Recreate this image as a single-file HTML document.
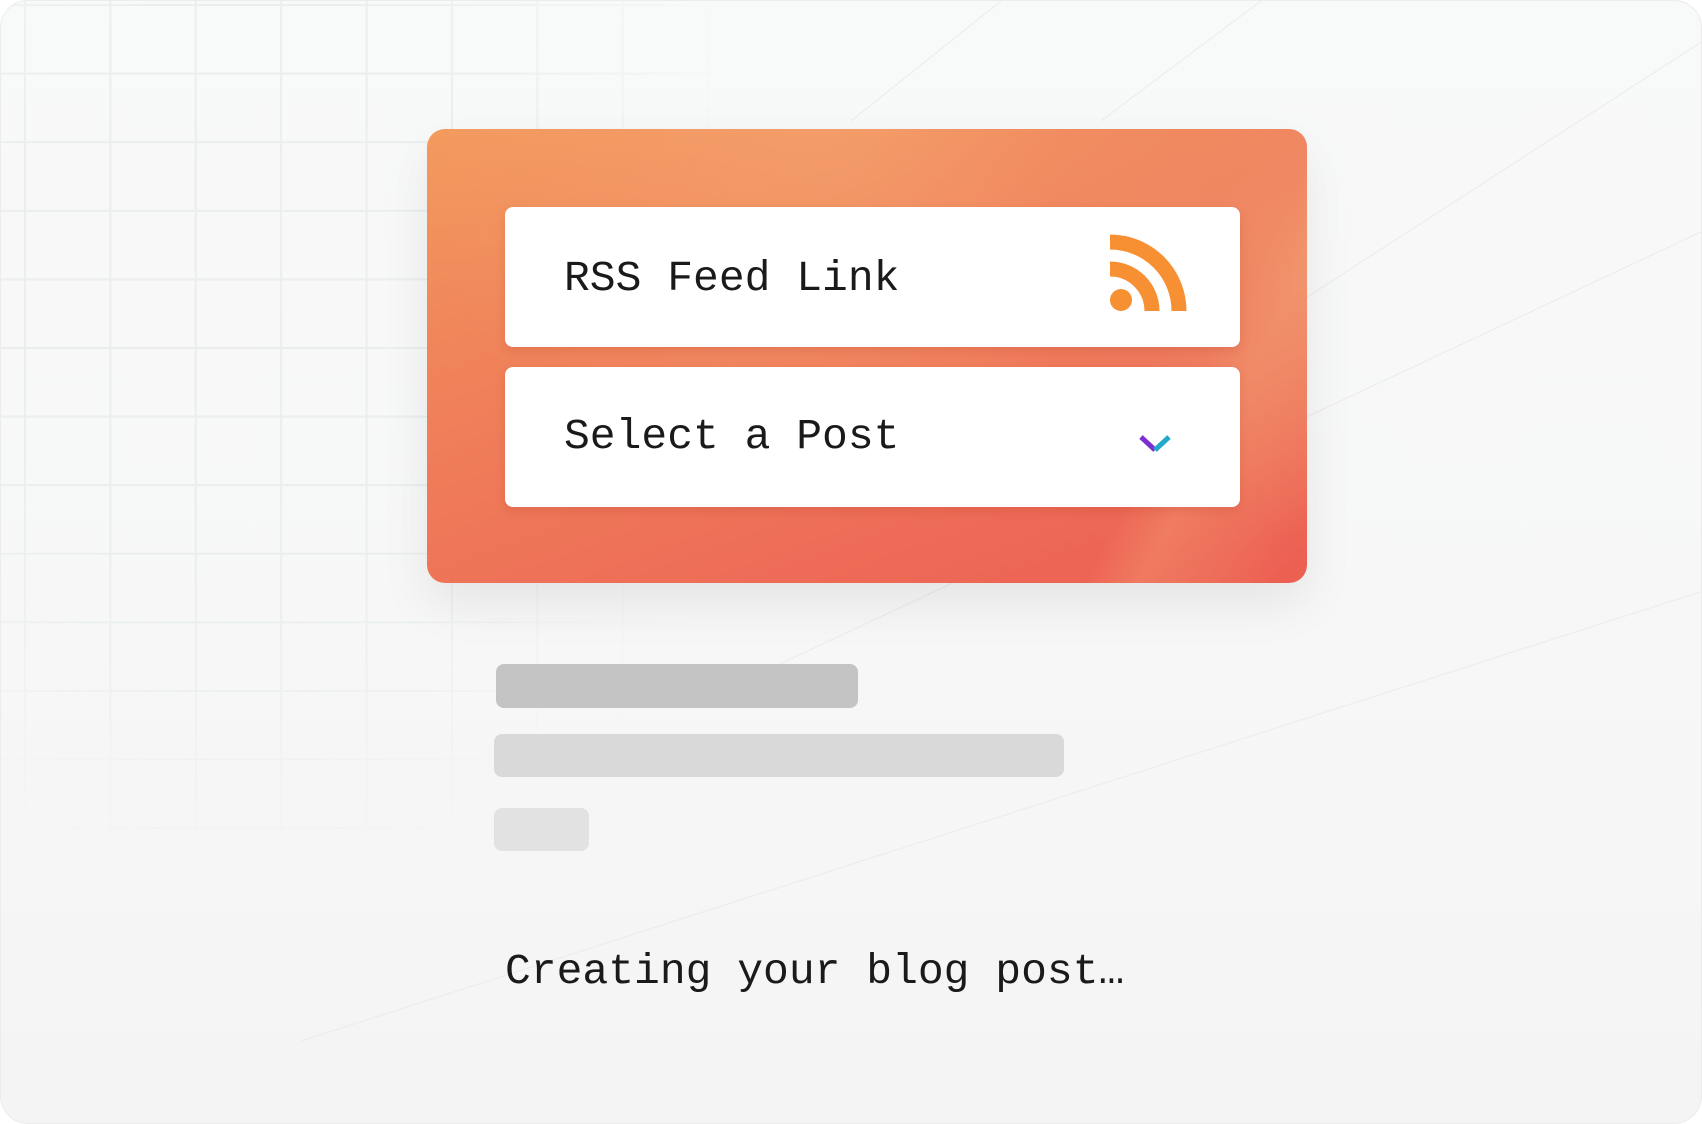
<!DOCTYPE html>
<html><head><meta charset="utf-8"><style>
html,body{margin:0;padding:0;width:1702px;height:1124px;overflow:hidden;background:#fff;}
.frame{position:absolute;left:0;top:0;width:1700px;height:1122px;border:1px solid #ececec;border-radius:28px;background:linear-gradient(180deg,#f8f9f9 0%,#f7f7f7 60%,#f4f4f4 100%);overflow:hidden;}
.grid{position:absolute;left:0;top:0;width:710px;height:830px;
background-image:linear-gradient(to right,#e8eded 2px,transparent 2px),linear-gradient(to bottom,#e8eded 2px,transparent 2px);
background-size:85.4px 68.6px;background-position:23px 3px;
-webkit-mask-image:radial-gradient(ellipse 75% 75% at 35% 35%,#000 50%,transparent 100%);mask-image:radial-gradient(ellipse 75% 75% at 35% 35%,#000 50%,transparent 100%);opacity:.85}
.card{position:absolute;left:427px;top:129px;width:880px;height:454px;border-radius:18px;
background:linear-gradient(160deg,#f39a5e 0%,#f0845a 30%,#ee6e58 70%,#ec5f52 100%);box-shadow:0 20px 50px rgba(0,0,0,.08);overflow:hidden}
.card .hl{position:absolute;inset:0;background:radial-gradient(ellipse at 45% 0%,rgba(246,175,120,.5),transparent 60%),radial-gradient(ellipse 30% 60% at 100% 30%,rgba(240,160,115,.55),transparent 100%),linear-gradient(118deg,transparent 80%,rgba(245,165,120,.35) 85%,transparent 97%)}
.box{position:absolute;left:505px;width:735px;height:140px;background:#fff;border-radius:8px;box-shadow:0 4px 10px rgba(150,40,20,.15)}
.t{position:absolute;left:564px;font-family:"Liberation Mono",monospace;font-size:43px;color:#1a1a1a;line-height:1}
.bar{position:absolute;border-radius:8px}
</style></head><body>
<div class="frame">
<div class="grid"></div>
<svg width="1702" height="1124" style="position:absolute;left:0;top:0">
<g stroke="#ebebeb" stroke-width="1" fill="none">
<line x1="300" y1="1040" x2="1702" y2="590"/>
<line x1="700" y1="700" x2="1702" y2="230"/>
<line x1="1300" y1="300" x2="1702" y2="40"/>
<line x1="850" y1="120" x2="1000" y2="0"/>
<line x1="1100" y1="120" x2="1260" y2="0"/>
</g></svg>
</div>
<div class="card"><div class="hl"></div></div>
<div class="box" style="top:207px"></div>
<div class="box" style="top:367px"></div>
<div class="t" style="top:257px">RSS Feed Link</div>
<div class="t" style="top:415px">Select a Post</div>
<svg width="1702" height="1124" style="position:absolute;left:0;top:0">
<g fill="none" stroke="#f78f33" stroke-width="15">
<path d="M1110,242 A69,69 0 0 1 1179,311"/>
<path d="M1110,269 A42,42 0 0 1 1152,311"/>
</g>
<circle cx="1121" cy="300" r="11" fill="#f78f33"/>
<path d="M1141,437 L1155,450" stroke="#7b2fd0" stroke-width="5" fill="none"/>
<path d="M1155,450 L1169,437" stroke="#21a9c9" stroke-width="5" fill="none"/>
</svg>
<div class="bar" style="left:496px;top:664px;width:362px;height:44px;background:#c4c4c4"></div>
<div class="bar" style="left:494px;top:734px;width:570px;height:43px;background:#d9d9d9"></div>
<div class="bar" style="left:494px;top:808px;width:95px;height:43px;background:#e2e2e2"></div>
<div class="t" style="left:505px;top:950px">Creating your blog post…</div>
</body></html>
